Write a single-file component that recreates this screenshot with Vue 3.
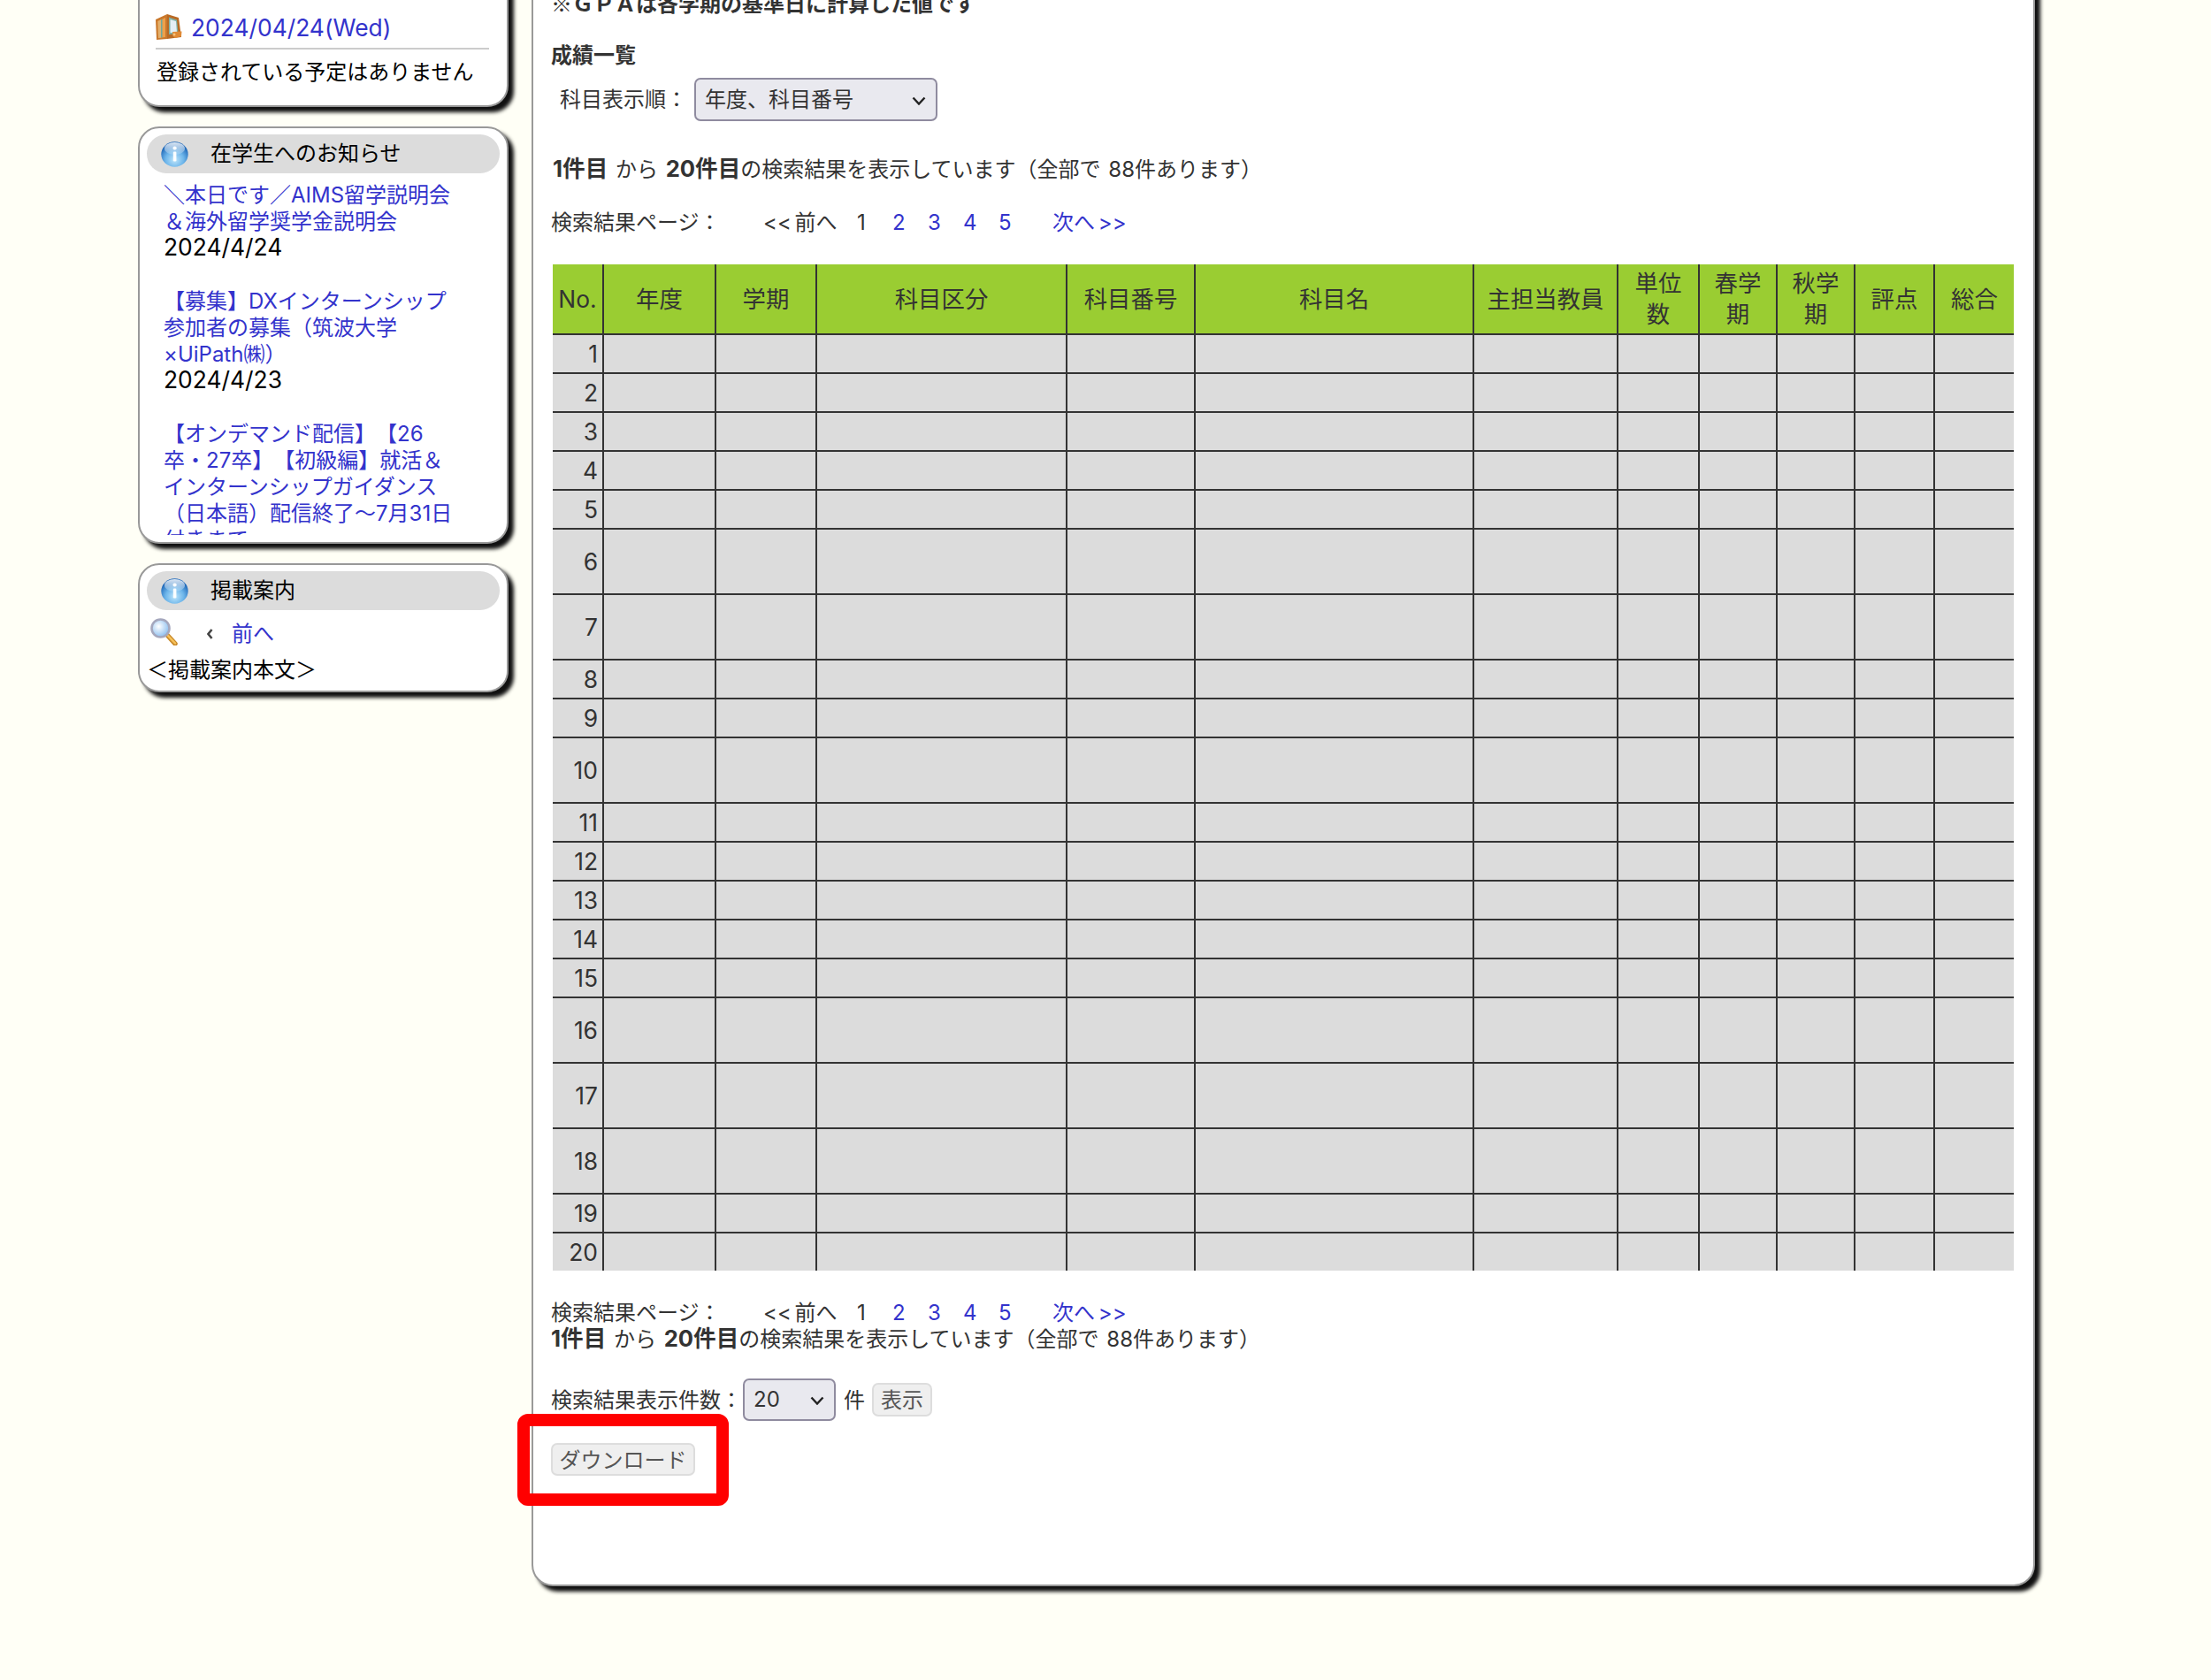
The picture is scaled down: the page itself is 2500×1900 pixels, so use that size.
<script setup>
const cols = [58, 127, 114, 283, 145, 315, 163, 92, 88, 88, 90, 89]

const heads = [
  ['No.'],
  ['年度'],
  ['学期'],
  ['科目区分'],
  ['科目番号'],
  ['科目名'],
  ['主担当教員'],
  ['単位', '数'],
  ['春学', '期'],
  ['秋学', '期'],
  ['評点'],
  ['総合']
]

// 6, 7, 10, 16, 17, 18 are the taller rows
const tall = [6, 7, 10, 16, 17, 18]
const rows = Array.from({ length: 20 }, (_, i) => ({
  no: i + 1,
  tall: tall.includes(i + 1)
}))

const pages = [2, 3, 4, 5]
</script>

<template>
  <div class="page">
    <svg class="defs" aria-hidden="true">
      <defs>
        <radialGradient id="ball" cx="50%" cy="72%" r="62%">
          <stop offset="0" stop-color="#bfe6fb" />
          <stop offset="0.55" stop-color="#6db5ea" />
          <stop offset="1" stop-color="#1f68b8" />
        </radialGradient>
        <linearGradient id="gloss" x1="0" y1="0" x2="0" y2="1">
          <stop offset="0" stop-color="#ffffff" stop-opacity="0.85" />
          <stop offset="1" stop-color="#ffffff" stop-opacity="0.15" />
        </linearGradient>
        <radialGradient id="lens" cx="40%" cy="40%" r="60%">
          <stop offset="0" stop-color="#ffffff" />
          <stop offset="1" stop-color="#8fc0f0" />
        </radialGradient>
      </defs>
      <symbol id="info" viewBox="0 0 31 29">
        <ellipse cx="15.5" cy="14.5" rx="15.2" ry="14.2" fill="url(#ball)" />
        <ellipse cx="15.5" cy="8" rx="11.5" ry="7" fill="url(#gloss)" />
        <rect x="13.8" y="11.5" width="3.6" height="11" rx="1.2" fill="#fff" opacity="0.95" />
        <circle cx="15.6" cy="7.5" r="2.1" fill="#fff" />
      </symbol>
    </svg>

    <aside class="side">
      <section class="panel panel-cal">
        <div class="cal-date">
          <svg class="ico-book" viewBox="0 0 30 30" aria-hidden="true">
            <path d="M0 6 13 0V28L1 29Z" fill="#c9782c" />
            <path d="M13 0 26 4 29 26 13 28Z" fill="#b96a24" />
            <path d="M2.5 8 11 4V26L3 27Z" fill="#ee9f49" />
            <path d="M2.5 8 6 6.3V26.5L3 27Z" fill="#e3b06c" />
            <path d="M6 6.3 7.5 5.6V26.3L6 26.5Z" fill="#6fa79b" />
            <path d="M15 3.5 24 6.5 25.5 22 15 23Z" fill="#7fb0a6" />
            <path d="M16.5 6 23 8 24 20.5 16.5 21Z" fill="#e4eef5" />
            <path d="M19 20 29.5 19.5 29 25 22 27 19.5 25Z" fill="#e08a35" />
            <circle cx="21" cy="23" r="1.5" fill="#f6c27c" />
          </svg>
          <a class="link date">2024/04/24(Wed)</a>
        </div>
        <div class="cal-text">登録されている予定はありません</div>
      </section>

      <section class="panel panel-news">
        <h3 class="pill">
          <svg class="ico-info" aria-hidden="true"><use href="#info" /></svg>
          在学生へのお知らせ
        </h3>
        <div class="news">
          <p>
            <a class="link">＼本日です／AIMS留学説明会<br>＆海外留学奨学金説明会</a><br>
            <span class="date">2024/4/24</span>
          </p>
          <p>
            <a class="link">【募集】DXインターンシップ<br>参加者の募集（筑波大学<br>×UiPath㈱）</a><br>
            <span class="date">2024/4/23</span>
          </p>
          <p>
            <a class="link">【オンデマンド配信】【26<br>卒・27卒】【初級編】就活＆<br>インターンシップガイダンス<br>（日本語）配信終了～7月31日<br>付きまで</a>
          </p>
        </div>
      </section>

      <section class="panel panel-info">
        <h3 class="pill">
          <svg class="ico-info" aria-hidden="true"><use href="#info" /></svg>
          掲載案内
        </h3>
        <div class="info-nav">
          <svg class="ico-lens" viewBox="0 0 31 31" aria-hidden="true">
            <path d="M18 18 28 29" stroke="#c98a2a" stroke-width="5.5" stroke-linecap="round" />
            <path d="M18.5 18.5 28 28.5" stroke="#f7c25a" stroke-width="2.5" stroke-linecap="round" />
            <circle cx="11.5" cy="11.5" r="10" fill="url(#lens)" stroke="#a5a7bd" stroke-width="2.6" />
          </svg>
          <svg class="ico-prev" viewBox="0 0 7 12" aria-hidden="true">
            <path d="M5.5 1 1.5 6 5.5 11" fill="none" stroke="#444" stroke-width="2.6" />
          </svg>
          <a class="link">前へ</a>
        </div>
        <div class="info-body">＜掲載案内本文＞</div>
      </section>
    </aside>

    <main class="main">
      <p class="gpa">※ＧＰＡは各学期の基準日に計算した値です</p>
      <h4 class="title">成績一覧</h4>

      <div class="sort-row">
        <span class="sort-label">科目表示順：</span>
        <div class="select select-sort">
          <select>
            <option>年度、科目番号</option>
          </select>
          <svg viewBox="0 0 16 10" aria-hidden="true"><path d="M1.5 1.5 8 8.5 14.5 1.5" /></svg>
        </div>
      </div>

      <p class="result result-top"><b>1件目</b> から <b>20件目</b>の検索結果を表示しています（全部で 88件あります）</p>

      <div class="pager pager-top">
        <span class="pager-label">検索結果ページ：</span>
        <span class="pager-prev">&lt;&lt; 前へ</span>
        <span class="pager-num">1</span>
        <a v-for="p in pages" :key="p" class="pager-num link">{{ p }}</a>
        <a class="pager-next link">次へ &gt;&gt;</a>
      </div>

      <table class="grades">
        <colgroup>
          <col v-for="(w, i) in cols" :key="i" :style="{ width: w + 'px' }">
        </colgroup>
        <thead>
          <tr>
            <th v-for="(h, i) in heads" :key="i">
              <template v-for="(line, j) in h" :key="j">
                <br v-if="j > 0">{{ line }}
              </template>
            </th>
          </tr>
        </thead>
        <tbody>
          <tr v-for="r in rows" :key="r.no" :class="{ tall: r.tall }">
            <td class="no">{{ r.no }}</td>
            <td v-for="c in 11" :key="c"></td>
          </tr>
        </tbody>
      </table>

      <div class="pager pager-bottom">
        <span class="pager-label">検索結果ページ：</span>
        <span class="pager-prev">&lt;&lt; 前へ</span>
        <span class="pager-num">1</span>
        <a v-for="p in pages" :key="p" class="pager-num link">{{ p }}</a>
        <a class="pager-next link">次へ &gt;&gt;</a>
      </div>
      <p class="result"><b>1件目</b> から <b>20件目</b>の検索結果を表示しています（全部で 88件あります）</p>

      <div class="count-row">
        <span class="count-label">検索結果表示件数：</span>
        <div class="select select-count">
          <select>
            <option>20</option>
          </select>
          <svg viewBox="0 0 16 10" aria-hidden="true"><path d="M1.5 1.5 8 8.5 14.5 1.5" /></svg>
        </div>
        <span class="count-unit">件</span>
        <button class="btn">表示</button>
      </div>

      <div class="download">
        <button class="btn btn-dl">ダウンロード</button>
        <div class="mark"></div>
      </div>
    </main>
  </div>
</template>

<style scoped>
.page {
  width: 2500px;
  height: 1900px;
  overflow: hidden;
  display: flex;
  align-items: flex-start;
  gap: 26px;
  padding-left: 156px;
  box-sizing: border-box;
  background: #fffff6;
  color: #000;
  font-family: Inter, "Noto Sans CJK JP", sans-serif;
  font-size: 24px;
  line-height: 30px;
  text-spacing-trim: space-all;
}

.defs {
  position: absolute;
  width: 0;
  height: 0;
}

.link {
  color: #3333cc;
  text-decoration: none;
}

.date {
  font-size: 26.4px;
  line-height: 0;
}

/* side column */
.side {
  width: 419px;
  flex: none;
  display: flex;
  flex-direction: column;
  gap: 22px;
  margin-top: -60px;
}

.panel {
  background: #fff;
  border: 2px solid #999;
  border-radius: 24px;
  box-shadow: 6px 6px 4px #111;
  box-sizing: border-box;
}

.panel-cal {
  height: 181px;
  padding: 72px 20px 0 19px;
}

.cal-date {
  display: flex;
  align-items: center;
  gap: 10px;
  height: 34px;
  margin-left: -1px;
  padding-bottom: 6px;
  border-bottom: 2px solid #ccc;
  box-sizing: content-box;
}

.ico-book {
  width: 30px;
  height: 30px;
  flex: none;
}

.cal-text {
  margin-top: 11px;
}

.panel-news {
  height: 472px;
  padding: 7px 8px 0;
}

.panel-info {
  height: 146px;
  padding: 7px 8px 0;
}

.pill {
  display: flex;
  align-items: center;
  gap: 25px;
  height: 44px;
  margin: 0;
  padding-left: 16px;
  border-radius: 22px;
  background: #dcdcdc;
  font-size: 24px;
  font-weight: normal;
}

.ico-info {
  width: 31px;
  height: 29px;
  flex: none;
}

/* last item is cut off by the panel in the original too */
.news {
  height: 400px;
  box-sizing: border-box;
  margin: 9px 0 0 19px;
  padding-top: 1px;
  overflow: hidden;
  white-space: nowrap;
}

.news p {
  margin: 0 0 30px;
}

.info-nav {
  display: flex;
  align-items: center;
  height: 44px;
  margin-top: 5px;
  padding-left: 4px;
}

.ico-lens {
  width: 31px;
  height: 31px;
  flex: none;
  margin-top: -6px;
}

.ico-prev {
  width: 7px;
  height: 12px;
  flex: none;
  margin: 0 21px 0 33px;
}

.info-body {
  margin-top: 4px;
}

/* main column */
.main {
  width: 1700px;
  flex: none;
  box-sizing: border-box;
  margin-top: -40px;
  padding: 26px 0 123px 20px;
  background: #fff;
  border: 2px solid #999;
  border-radius: 24px;
  box-shadow: 6px 6px 4px #111;
  color: #333;
}

.gpa {
  margin: 0;
  font-family: "Noto Sans CJK JP", sans-serif;
  font-weight: bold;
}

.title {
  margin: 30px 0 0;
  font-size: 24px;
  font-weight: bold;
}

.sort-row {
  display: flex;
  align-items: center;
  margin-top: 10px;
  padding-left: 10px;
}

.sort-label {
  width: 152px;
}

.select {
  position: relative;
  box-sizing: border-box;
}

.select select {
  display: block;
  width: 100%;
  height: 100%;
  box-sizing: border-box;
  appearance: none;
  background: #e9e9ef;
  border: 2px solid #8f8b9f;
  border-radius: 7px;
  color: #333;
  font: inherit;
}

.select svg {
  position: absolute;
  top: 50%;
  right: 13px;
  width: 16px;
  height: 10px;
  margin-top: -4px;
  fill: none;
  stroke: #222;
  stroke-width: 2.4;
}

.select-sort {
  width: 275px;
  height: 49px;
}

.select-sort select {
  padding-left: 10px;
}

.result {
  margin: 0;
  word-spacing: 2px;
}

.result b {
  font-size: 25.6px;
  line-height: 0;
}

.result-top {
  margin-top: 40px;
  margin-left: 2px;
}

.pager {
  display: flex;
  height: 30px;
}

.pager-top {
  margin-top: 30px;
}

.pager-bottom {
  margin-top: 33px;
}

.pager-label {
  width: 240px;
  flex: none;
}

.pager-prev {
  width: 106px;
  flex: none;
  word-spacing: -3px;
}

.pager-num {
  width: 40px;
  flex: none;
}

.pager-next {
  margin-left: 21px;
  word-spacing: -3px;
}

.grades {
  width: 1652px;
  margin: 32px 0 0 2px;
  table-layout: fixed;
  border-collapse: separate;
  border-spacing: 0;
  font-size: 26.4px;
}

.grades th {
  height: 78px;
  padding: 0;
  background: #9acd32;
  border-right: 2px solid #333;
  border-bottom: 2px solid #333;
  font-weight: normal;
  line-height: 35px;
  text-align: center;
}

.grades td {
  height: 42px;
  padding: 0;
  background: #dcdcdc;
  border-right: 2px solid #333;
  border-bottom: 2px solid #333;
}

.grades tr.tall td {
  height: 72px;
}

.grades th:last-child,
.grades td:last-child {
  border-right: none;
}

.grades tbody tr:last-child td {
  border-bottom: none;
}

.grades td.no {
  padding-right: 5px;
  text-align: right;
}

.count-row {
  display: flex;
  align-items: center;
  margin-top: 29px;
}

.count-label,
.count-unit {
  padding-top: 2px;
}

.select-count {
  width: 105px;
  height: 48px;
  margin-left: 1px;
}

.select-count select {
  padding-left: 10px;
}

.count-unit {
  margin: 0 8px 0 9px;
}

.btn {
  height: 38px;
  padding: 2px 8px 0;
  box-sizing: border-box;
  background: #efefef;
  border: 2px solid #ddd;
  border-radius: 7px;
  color: #555;
  font: inherit;
  line-height: 30px;
}

.download {
  position: relative;
  width: 163px;
  margin-top: 25px;
}

.btn-dl {
  display: block;
  width: 163px;
  height: 37px;
  padding: 2px 0 0;
}

.mark {
  position: absolute;
  top: -33px;
  right: -38px;
  bottom: -34px;
  left: -38px;
  border: 14px solid #f00;
  border-radius: 12px;
  pointer-events: none;
}
</style>

<style>
html,
body {
  margin: 0;
  background: #fffff6;
}
</style>
